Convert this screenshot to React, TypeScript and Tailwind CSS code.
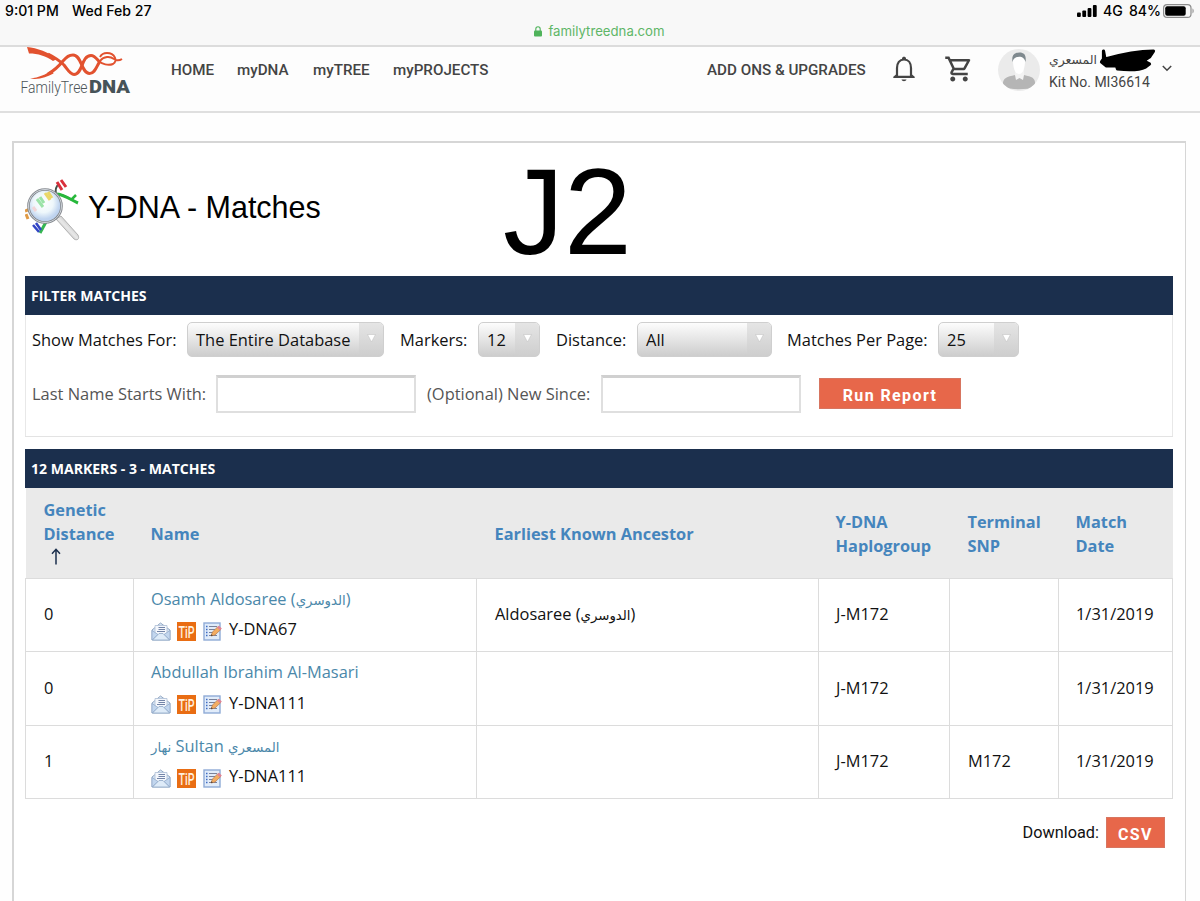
import { MdOutlineShoppingCart } from 'react-icons/md';

const navLinks = [
  { label: 'HOME', className: 'w-[66px]' },
  { label: 'myDNA', className: 'w-[76px]' },
  { label: 'myTREE', className: 'w-[80px]' },
  { label: 'myPROJECTS', className: 'w-[110px]' },
];

const matches = [
  { distance: '0', name: 'Osamh Aldosaree (', arabic: 'الدوسري', tail: ')', test: 'Y-DNA67', ancestor: true, snp: '' },
  { distance: '0', name: 'Abdullah Ibrahim Al-Masari', arabic: '', tail: '', test: 'Y-DNA111', ancestor: false, snp: '' },
  { distance: '1', name: '', arabic: '', tail: '', test: 'Y-DNA111', ancestor: false, snp: 'M172' },
];

const arabicClass = "font-['DejaVu_Sans',sans-serif] text-[13.3px] tracking-[-0.3px]";

function StatusBar() {
  return (
    <div className="h-[47px] border-b-2 border-[#dcdcdc] bg-[#f8f8f8] font-['Inter',sans-serif] text-black">
      <div className="flex h-[22px] items-center pl-[5px] pr-[5px] text-[14.1px] font-medium">
        <span className="w-[67px] whitespace-nowrap">9:01 PM</span>
        <span className="whitespace-nowrap">Wed Feb 27</span>
        <div className="ml-auto flex items-center">
          <svg width="20" height="12" viewBox="0 0 20 12" className="mr-[6px]">
            <rect x="0" y="7.5" width="3.8" height="4.5" rx="1" />
            <rect x="5.3" y="5.5" width="3.8" height="6.5" rx="1" />
            <rect x="10.6" y="3" width="3.8" height="9" rx="1" />
            <rect x="15.9" y="0" width="3.8" height="12" rx="1" />
          </svg>
          <span className="w-[26px] whitespace-nowrap">4G</span>
          <span className="w-[34px] whitespace-nowrap">84%</span>
          <svg width="32" height="14" viewBox="0 0 32 14">
            <rect x="0.6" y="0.6" width="27.4" height="12.8" rx="3.5" fill="none" stroke="#8c8c8c" strokeWidth="1.2" />
            <rect x="2.2" y="2.2" width="20.5" height="9.6" rx="2" />
            <path d="M29.5 4.6c1.5.6 1.5 4.2 0 4.8z" fill="#8c8c8c" />
          </svg>
        </div>
      </div>
      <div className="flex h-[19px] items-center justify-center pr-px text-[13.2px] text-[#5eb667]">
        <svg width="8" height="11" viewBox="0 0 8 11" className="mr-[6px]">
          <rect x="0" y="4.6" width="8" height="6" rx="1" fill="#4fb35b" />
          <path d="M1.8 5V3a2.2 2.2 0 0 1 4.4 0v2" fill="none" stroke="#4fb35b" strokeWidth="1.1" />
        </svg>
        familytreedna.com
      </div>
    </div>
  );
}

function Logo() {
  return (
    <svg width="112" height="50" viewBox="0 0 112 50" overflow="visible">
      <g fill="none" stroke="#e2522f" strokeLinejoin="round">
        <path d="M28 7C36 11 40 14 44 18c4 5 6 9.500 10 9.500C63 27.500 61 8.500 71 8.500c4 0 6 4 9 7" strokeWidth="3" />
        <path d="M28 27c7-4 11-8 15-13 4-4.500 6-6 10-6 9 0 8 18.500 16.500 18.500 6 0 7-8 10.500-12" strokeWidth="3" />
        <path d="M79 14c3 3 9 5 14 3 5-3 2-11-6-11-4 0-6 2-7 4M80 14c4-5 10-5 14-2 3 2 5 2 8 0" strokeWidth="1.900" />
      </g>
      <path d="M7 0c10 1 22 5 30 12l-4 2C26 9 18 6.500 9 6.500z" fill="#e2522f" />
      <path d="M10 31.500c9-1 16-4 22-8.500l1.500 3.500C27 30 19 33 10 31.500z" fill="#e2522f" />
      <text transform="translate(0.5 46) scale(0.82 1)" fontFamily="Roboto, sans-serif" fontSize="17" fontWeight="300" fill="#4c5558">FamilyTree</text>
      <text x="69" y="46" textLength="41" lengthAdjust="spacingAndGlyphs" fontFamily="Roboto, sans-serif" fontSize="17.500" fontWeight="900" fill="#465358">DNA</text>
    </svg>
  );
}

function Avatar() {
  return (
    <svg width="42" height="42" viewBox="0 0 42 42">
      <defs>
        <clipPath id="avatar"><circle cx="21" cy="21" r="21" /></clipPath>
      </defs>
      <circle cx="21" cy="21" r="21" fill="#ebebeb" />
      <g clipPath="url(#avatar)">
        <path d="M5 38c-1-9 3-10 12-12l4.500 3 4.500-3c9 2 12 3 11 12-8 3-24 3-32 0z" fill="#b5b5b5" />
        <path d="M17 20h9v6l-1 5-3.500-2-3.500 2-1-5z" fill="#f3f3f3" />
        <path d="M15 11c0-8 12-8 12 0 0 8-2 14-6 14s-6-6-6-14z" fill="#fff" />
        <path d="M14.500 13c-1-7 2-9.500 7-9.500 5 0 7 3 6 9.500-1-3-2-4-4-5-3-1-8 0-9 5z" fill="#7f898e" />
      </g>
    </svg>
  );
}

function Header() {
  return (
    <header className="flex h-[66px] items-start border-b-2 border-[#dfdfdf] bg-[#fdfdfd] pl-[20px] font-['Roboto',sans-serif] text-[#444]">
      <div className="w-[151px]"><Logo /></div>
      <nav className="flex h-[46px] items-center text-[15.2px] font-medium">
        {navLinks.map((link) => (
          <a key={link.label} className={`${link.className} whitespace-nowrap`}>{link.label}</a>
        ))}
      </nav>
      <div className="ml-auto flex h-[45px] items-center">
        <a className="w-[186px] whitespace-nowrap pt-px text-[15.2px] font-medium">ADD ONS &amp; UPGRADES</a>
        <svg width="22" height="26" viewBox="0 0 22 26" className="mb-[2px] mr-[29px]">
          <path d="M4 20V12c0-5 2.500-8.500 7-8.500S18 7 18 12v8" fill="none" stroke="#444" strokeWidth="2.200" />
          <path d="M0.300 22v-1.200L3 18.500v1.200h16v-1.200l2.700 2.300V22zM9 2.500C9 0 13 0 13 2.500V4H9zM8.500 23.500h5c-.5 2.200-4.500 2.200-5 0z" fill="#444" />
        </svg>
        <MdOutlineShoppingCart className="mb-[2px] mr-[24px] size-[30px] text-[#444]" />
        <Avatar />
        <div className="ml-[9px] w-[111px] pt-[2px] text-[14px] leading-[20px]">
          <div className="flex h-[21px] items-center">
            <span className="w-[50px] whitespace-nowrap font-['DejaVu_Sans',sans-serif] text-[12.4px]">المسعري</span>
            <svg width="58" height="25" viewBox="0 0 58 25" className="shrink-0">
              <path d="M4.500 3v8l-2 3 5 4 10 0 1 3c9 1 22 1 28-2l4-3-6-3 6-4 4-6C40 3 20 7 6 11z" fill="#000" stroke="#000" strokeWidth="3.200" strokeLinecap="round" strokeLinejoin="round" />
            </svg>
          </div>
          <div className="whitespace-nowrap pt-px">Kit No. MI36614</div>
        </div>
        <svg width="10" height="7" viewBox="0 0 10 7" className="mb-[3px] ml-[2px] mr-[28px]">
          <path d="M0.800 1L5 5.300 9.200 1" fill="none" stroke="#444" strokeWidth="1.500" />
        </svg>
      </div>
    </header>
  );
}

function MagnifierIcon() {
  return (
    <svg width="56" height="64" viewBox="0 0 56 64" className="mt-[3px]">
      <defs>
        <radialGradient id="lens" cx="45%" cy="40%">
          <stop offset="0" stopColor="#fff" />
          <stop offset="0.6" stopColor="#eef7fb" />
          <stop offset="1" stopColor="#bed3ef" />
        </radialGradient>
        <linearGradient id="handle" x1="0" y1="1" x2="1" y2="0">
          <stop offset="0" stopColor="#777" />
          <stop offset="0.5" stopColor="#e8e8e8" />
          <stop offset="1" stopColor="#8a8a8a" />
        </linearGradient>
      </defs>
      <path d="M31 17c-1-6 0-9 3-11M29 16c6 0 12 2 18 6" fill="none" stroke="#43524a" strokeWidth="2" />
      <path d="M32 16c8 1 14 6 21 9" stroke="#27b83b" strokeWidth="3" fill="none" />
      <path d="M46 22l5-5" stroke="#27b83b" strokeWidth="2.500" />
      <path d="M32 4l5 8M36 2l5 7" stroke="#d9303c" strokeWidth="3" />
      <path d="M0 33l5-2M1 36l2 5" stroke="#e09a45" strokeWidth="3" />
      <path d="M15 55l6-11" stroke="#35b653" strokeWidth="3" />
      <path d="M8 47l6 7M11 45l5 7" stroke="#3144c4" strokeWidth="2.500" />
      <path d="M31 41l5-3 17 19c2 4-1 6-4 4z" fill="url(#handle)" stroke="#9a9a9a" strokeWidth="0.700" />
      <circle cx="20" cy="28" r="16.500" fill="url(#lens)" stroke="#85898f" strokeWidth="2.600" />
      <circle cx="20" cy="28" r="16.500" fill="none" stroke="#d7dce2" strokeWidth="0.900" />
      <path d="M12 21l6 8M15 19l4 6" stroke="#9be3a8" strokeWidth="3" />
      <path d="M20 15l5 7M23 14l4 6" stroke="#ead768" strokeWidth="3" />
      <path d="M8 29l3 4" stroke="#f2d5d8" strokeWidth="3" />
    </svg>
  );
}

function Select({ value, className }: { value: string; className: string }) {
  return (
    <div className={`${className} flex h-[35px] shrink-0 overflow-hidden rounded-[5px] border border-[#cfcfcf] bg-gradient-to-b from-[#fdfdfd] to-[#cdcdcd]`}>
      <span className="flex-1 whitespace-nowrap pl-2 leading-[34px]">{value}</span>
      <span className="flex w-[24px] items-center justify-center bg-gradient-to-b from-[#e5e5e5] to-[#cecece]">
        <svg width="9" height="9" viewBox="0 0 9 9" className="mb-[2px]">
          <path d="M0.500 0.500h8L4.500 8z" fill="#fff" stroke="#c4c4c4" strokeWidth="0.600" />
        </svg>
      </span>
    </div>
  );
}

function SectionTitle({ children }: { children: string }) {
  return (
    <h2 className="h-[39px] bg-[#1b2f4d] pl-[6px] text-[14.05px] font-bold leading-[39px] text-white">{children}</h2>
  );
}

function Filters() {
  return (
    <section className="h-[161px] border-b border-[#e3e3e3]">
      <SectionTitle>FILTER MATCHES</SectionTitle>
      <div className="h-[121px] border-x border-[#e8e8e8] pl-[6px] pt-[7px] text-[16.45px]">
        <div className="flex items-center whitespace-nowrap">
          <span className="w-[155px] pt-px">Show Matches For:</span>
          <Select value="The Entire Database" className="w-[197px]" />
          <span className="ml-[16px] w-[78px] pt-px">Markers:</span>
          <Select value="12" className="w-[62px]" />
          <span className="ml-[16px] w-[81px] pt-px">Distance:</span>
          <Select value="All" className="w-[135px]" />
          <span className="ml-[15px] w-[151px] pt-px">Matches Per Page:</span>
          <Select value="25" className="w-[81px]" />
        </div>
        <div className="mt-[18px] flex items-center whitespace-nowrap text-[#555]">
          <span className="w-[184px]">Last Name Starts With:</span>
          <input className="h-[38px] w-[200px] border-2 border-t-[3px] border-[#dfdfdf] border-t-[#d0d0d0] bg-white" />
          <span className="ml-[11px] w-[174px]">(Optional) New Since:</span>
          <input className="h-[38px] w-[200px] border-2 border-t-[3px] border-[#dfdfdf] border-t-[#d0d0d0] bg-white" />
          <button className="mb-[2px] ml-[18px] h-[31px] w-[142px] border border-[#d77560] bg-[#e7674a] pt-[5px] font-['Roboto',sans-serif] text-[16px] font-bold leading-none tracking-[1.4px] text-white">
            Run Report
          </button>
        </div>
      </div>
    </section>
  );
}

function RowIcons() {
  return (
    <>
      <svg width="20" height="19" viewBox="0 0 20 19" className="mr-[6px]">
        <path d="M1 8l8.500-7L19 8v10H1z" fill="#d4e3f4" stroke="#94a9c4" />
        <path d="M4 3.500h12V13H4z" fill="#f4f7fc" stroke="#aebfd5" strokeWidth="0.800" />
        <path d="M7.500 5.500H14M7.500 7.500H14M6 9.500h8" stroke="#7485a8" strokeWidth="1.200" />
        <path d="M1 8.500l6 4-6 5.500zM19 8.500l-6 4 6 5.500z" fill="#c2d6ee" stroke="#8fa8c8" strokeWidth="0.700" />
        <path d="M1.500 18L8 11.500h4l6.500 6.500z" fill="#deebf8" stroke="#8fa8c8" strokeWidth="0.800" />
      </svg>
      <svg width="19" height="19" viewBox="0 0 19 19" overflow="visible" className="mr-[7px]">
        <rect width="19" height="19" fill="#e96d13" />
        <text x="1.500" y="15.500" textLength="16" lengthAdjust="spacingAndGlyphs" fontFamily="Roboto, sans-serif" fontSize="17" fontWeight="500" fill="#fff0df">TiP</text>
      </svg>
      <svg width="20" height="19" viewBox="0 0 20 19" className="mr-[6px]">
        <rect x="1" y="1" width="16" height="17" fill="#e1ecfa" stroke="#8fabd6" strokeWidth="1.400" />
        <path d="M6 4.500h8M6 7.500h6M6 10.500h4M6 13.500h8" stroke="#7a8199" strokeWidth="1.200" />
        <path d="M3 4.500h1.500M3 7.500h1.500M3 10.500h1.500M3 13.500h1.500" stroke="#3f6cc4" strokeWidth="1.400" />
        <path d="M8 14l1.500-4L15 4.500l3 2.800L12 13z" fill="#f3ad62" stroke="#b5794c" strokeWidth="0.700" />
        <path d="M14 5.500l2-1.700 2.800 2.700L17 8.300z" fill="#df8396" />
        <path d="M8 14l.6-1.800 1.200 1.200z" fill="#333" />
      </svg>
    </>
  );
}

const thClass = 'pl-[18px] pt-[4px] text-left font-bold leading-[23.5px]';
const thNarrowClass = 'pl-[17px] pt-[4px] text-left font-bold leading-[23.5px]';
const tdClass = 'border border-[#dcdcdc] pl-[18px]';
const tdNarrowClass = 'border border-[#dcdcdc] pl-[17px]';

function MatchTable() {
  return (
    <table className="w-[1147px] table-fixed border-collapse text-[16.4px]">
      <colgroup>
        <col className="w-[108px]" />
        <col className="w-[343px]" />
        <col className="w-[342px]" />
        <col className="w-[131px]" />
        <col className="w-[109px]" />
        <col className="w-[114px]" />
      </colgroup>
      <thead>
        <tr className="h-[90px] bg-[#eaeaea] text-[16.35px] text-[#4585bd]">
          <th className={thClass}>
            Genetic<br />Distance
            <svg width="10" height="17" viewBox="0 0 10 17" className="mb-[5px] ml-[7px] mt-[2px]">
              <path d="M5 16.500V1.500M1 5.800l4-4.500 4 4.500" fill="none" stroke="#1b2f4d" strokeWidth="1.500" />
            </svg>
          </th>
          <th className={thNarrowClass}>Name</th>
          <th className={thClass}>Earliest Known Ancestor</th>
          <th className={thNarrowClass}>Y-DNA<br />Haplogroup</th>
          <th className={thClass}>Terminal<br />SNP</th>
          <th className={thNarrowClass}>Match<br />Date</th>
        </tr>
      </thead>
      <tbody>
        {matches.map((match, i) => (
          <tr key={i} className="h-[73.5px]">
            <td className={tdClass}>{match.distance}</td>
            <td className={tdNarrowClass}>
              <div className="h-[31px] whitespace-nowrap leading-[28px] text-[#4b88aa]">
                {match.name}
                {match.arabic && <span className={arabicClass}>{match.arabic}</span>}
                {match.tail}
                {!match.name && (
                  <>
                    <span className={arabicClass}>نهار</span> Sultan <span className={arabicClass}>المسعري</span>
                  </>
                )}
              </div>
              <div className="flex h-[29px] items-center pt-[2px]">
                <RowIcons />
                <span className="pb-[3px]">{match.test}</span>
              </div>
            </td>
            <td className={tdClass}>
              {match.ancestor && <>Aldosaree (<span className={arabicClass}>الدوسري</span>)</>}
            </td>
            <td className={tdNarrowClass}>J-M172</td>
            <td className={tdClass}>{match.snp}</td>
            <td className={`${tdNarrowClass} whitespace-nowrap`}>1/31/2019</td>
          </tr>
        ))}
      </tbody>
    </table>
  );
}

export default function App() {
  return (
    <div className="h-[901px] w-[1200px] overflow-hidden bg-[#fefefe] font-['Open_Sans',sans-serif] text-[#111]">
      <StatusBar />
      <Header />
      <main className="ml-[12px] mt-[28px] h-[800px] w-[1174px] border border-l-2 border-t-2 border-[#d6d6d6] bg-white pl-[11px] pr-[12px]">
        <div className="flex h-[133px] items-center pb-[3px] font-['Liberation_Sans',sans-serif] text-black">
          <MagnifierIcon />
          <h1 className="ml-[7px] w-[415px] whitespace-nowrap text-[30.5px]">Y-DNA - Matches</h1>
          <span className="mt-[7px] text-[122px] leading-none">J2</span>
        </div>
        <Filters />
        <section className="mt-[12px]">
          <SectionTitle>12 MARKERS - 3 - MATCHES</SectionTitle>
          <MatchTable />
        </section>
        <div className="mt-[18px] flex items-center justify-end pr-[8px] font-['Roboto',sans-serif] text-[16.3px]">
          <span className="mr-[7px] pt-px">Download:</span>
          <button className="h-[31px] w-[59px] border border-[#d77560] bg-[#e7674a] pt-[4px] text-[16px] font-bold leading-none tracking-[1.4px] text-white">CSV</button>
        </div>
      </main>
    </div>
  );
}
